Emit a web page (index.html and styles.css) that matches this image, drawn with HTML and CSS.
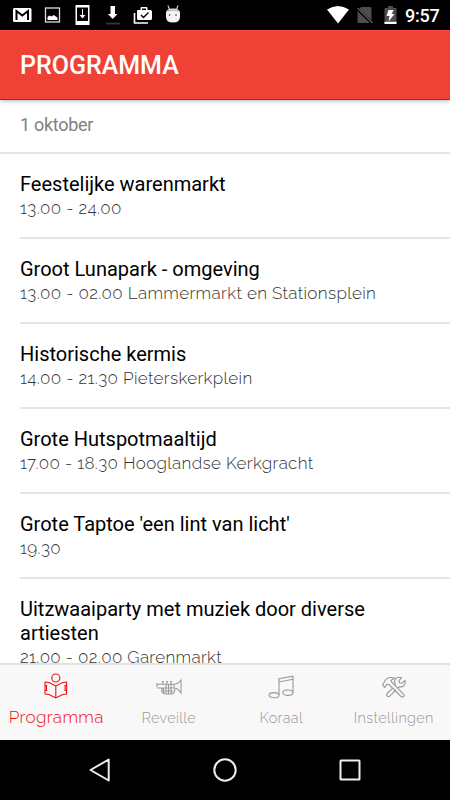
FILE: index.html
```html
<!DOCTYPE html>
<html lang="nl">
<head>
<meta charset="utf-8">
<title>Programma</title>
<link rel="stylesheet" href="styles.css">
</head>
<body>
<div class="phone">
  <div class="status">
    <svg class="status-icons" width="225" height="30" viewBox="0 0 225 30">
      <rect x="13" y="8" width="18.500" height="14" rx="1.500" fill="#fff"/>
      <path d="M16.500 20V11l5.800 4.500L28 11v9" fill="none" stroke="#000" stroke-width="2"/>
      <rect x="45.500" y="8" width="14" height="14" fill="none" stroke="#ddd" stroke-width="1.300"/>
      <path d="M47.500 20v-3l2-1.500 2 1 2-1.500 4 2.500V20z" fill="#fff"/>
      <path d="M75.500 5h14v20h-14z" fill="#fff"/>
      <path d="M77 7.500h11v13.500H77z" fill="#000"/>
      <path d="M82 9h1v6h2.500l-3 3.500-3-3.500H82z" fill="#fff"/>
      <path d="M110.500 6h4.500v8h2.500l-4.800 5-4.800-5h2.600z" fill="#fff"/>
      <path d="M106 22.500h14v2h-14z" fill="#333"/>
      <path d="M137.500 10h3V8q0-1 1-1h5q1 0 1 1v2h3q1.500 0 1.500 1.500v7q0 1.500-1.500 1.500h-12q-1.500 0-1.500-1.500v-7q0-1.500 .5-1.500z" fill="#fff"/>
      <path d="M142 8.500h4v1.500h-4z" fill="#000"/>
      <path d="M141 15l2.500 2.500 5-5" fill="none" stroke="#000" stroke-width="1.400"/>
      <path d="M134.500 13v10H148" fill="none" stroke="#fff" stroke-width="1.600"/>
      <path d="M166 13q0-4.500 7-4.500t7 4.500v4q0 5.500-7 5.500t-7-5.500z" fill="#f4f4f4"/>
      <path d="M168 5.500l1.500 4M178 5.500l-1.500 4" stroke="#ccc" stroke-width="1.200"/>
      <path d="M167 11q6-2 12 0" fill="none" stroke="#aaa"/>
      <circle cx="169.500" cy="15" r=".7"/><circle cx="176" cy="15" r=".7"/>
    </svg>
    <svg class="status-right" width="76" height="30" viewBox="327 0 76 30">
      <path d="M327 9.500q11-7 22 0l-11 14z" fill="#fff"/>
      <path d="M361 7h9q1.500 0 1.500 1.500V22q0 1-1 1h-12q-1 0-1-1V11z" fill="#4d4d4d"/>
      <path d="M356 7.500l16.500 16" stroke="#000" stroke-width="3"/>
      <path d="M357.500 8l15 15" stroke="#5a5a5a" stroke-width="1.200"/>
      <path d="M388 6h5v2h3.500v16h-12V8h3.500z" fill="#4d4d4d"/>
      <path d="M384.500 21.800h12V24h-12z" fill="#fff"/>
      <path d="M388.500 10h5l-1.800 4h2.800l-6 7.500 1-5.500h-3z" fill="#fff"/>
    </svg>
    <span class="clock">9:57</span>
  </div>
  <header class="appbar"><h1>PROGRAMMA</h1></header>
  <main class="content">
    <h2 class="date">1 oktober</h2>
    <ul class="events">
      <li><h3>Feestelijke warenmarkt</h3><p>13.00 - 24.00</p></li>
      <li><h3>Groot Lunapark - omgeving</h3><p>13.00 - 02.00 Lammermarkt en Stationsplein</p></li>
      <li><h3>Historische kermis</h3><p>14.00 - 21.30 Pieterskerkplein</p></li>
      <li><h3>Grote Hutspotmaaltijd</h3><p>17.00 - 18.30 Hooglandse Kerkgracht</p></li>
      <li><h3>Grote Taptoe 'een lint van licht'</h3><p>19.30</p></li>
      <li><h3>Uitzwaaiparty met muziek door diverse artiesten</h3><p>21.00 - 02.00 Garenmarkt</p></li>
    </ul>
  </main>
  <nav class="tabs">
    <a class="tab active">
      <svg width="28" height="28" viewBox="0 0 28 28"><circle cx="13.800" cy="6" r="4"/><path d="M13.800 14L7 10.500l-4-.5v3.500h1.500v5H3V22l4 .5 6.800 3.500 6.800-3.500 4-.5v-3.500h-1.500v-5h1.500V10l-4 .5zM13.800 14v12M3 13.500v5M24.600 13.500v5"/></svg>
      <span>Programma</span>
    </a>
    <a class="tab">
      <svg width="28" height="28" viewBox="0 0 28 28"><path d="M2 11v4M2 12.300h17q4 0 7-4.300v13q-3-5-7-5H2M8 12v-2M12 12v-2M16 12v-2M7 9.500h2M11 9.500h2M15 9.500h2M8 16q-2 1-1 4 1 2 4 2h5q4 0 4-6M8.500 16v5.500M11 12v9.500M13.500 12v9.500M16 12v9.500M8.500 19h9.500M19 12.500v3.500"/></svg>
      <span>Reveille</span>
    </a>
    <a class="tab">
      <svg width="28" height="28" viewBox="0 0 28 28"><ellipse cx="7" cy="23.200" rx="5" ry="2.600"/><ellipse cx="20.800" cy="20.700" rx="5" ry="2.700"/><path d="M12 23V6.800L26 4.200v16.500M12 10l14-2.700"/></svg>
      <span>Koraal</span>
    </a>
    <a class="tab">
      <svg width="28" height="28" viewBox="0 0 28 28"><path d="M2.500 13l1.800-3q2.500-5 7.200-4.500l3 .5-3.500 2.500 1 2L24 22.500q.5 1-.5 2t-2.500 0L9 12.500l-2-.2-2.300 3zM15.500 13.500l-1-4q.5-4 5-4.300l2 .5-2.500 3 .5 2 2.300.5 3.200-2.700q1 3-1 5.200-2 1.600-4.500 1l-1.500 1.300M16 18l-6.500 6.300q-1.500.7-2.500-.5t0-2.300l6-5.700"/></svg>
      <span>Instellingen</span>
    </a>
  </nav>
  <div class="sysnav">
    <svg width="24" height="24" viewBox="0 0 24 24"><path d="M2.500 12L20.700 1.500v21z"/></svg>
    <svg width="24" height="24" viewBox="0 0 24 24"><circle cx="12" cy="12" r="10.700"/></svg>
    <svg width="24" height="24" viewBox="0 0 24 24"><rect x="2.500" y="2.500" width="19" height="19" rx=".5"/></svg>
  </div>
</div>
</body>
</html>
```
FILE: styles.css
```css
* { box-sizing: border-box; margin: 0; padding: 0; }
body { font-family: Roboto, sans-serif; background: #fff; }
.phone { width: 450px; height: 800px; display: flex; flex-direction: column; overflow: hidden; }
.status { height: 30px; flex: none; background: #000; display: flex; align-items: center; }
.status-right { margin-left: 102px; }
.clock { color: #fff; font-size: 18px; font-weight: 500; line-height: 31px; margin-left: 2px; letter-spacing: -.2px; }
.appbar { height: 70px; flex: none; background: #ef4136; border-top: 1px solid #ff4a3e; border-bottom: 1px solid #d90f0f; box-shadow: 0 1px 4px rgba(0,0,0,.3); padding-left: 20px; position: relative; }
.appbar h1 { color: #fff; font-size: 25px; font-weight: 500; line-height: 69px; }
.content { flex: 1; min-height: 0; overflow: hidden; }
.date { height: 54px; border-bottom: 2px solid #e5e5e5; padding: 13px 20px 0; font-size: 18px; letter-spacing: -.3px; line-height: 24px; font-weight: 400; color: #808080; }
.events { list-style: none; padding-left: 20px; }
.events li { border-bottom: 2px solid #e5e5e5; padding: 18px 60px 17px 0; }
.events h3 { font-size: 20px; line-height: 24px; font-weight: 400; color: #000; }
.events p, .tab { font-family: Raleway, Lato, sans-serif; font-weight: 300; font-variant-numeric: oldstyle-nums; }
.events p { font-size: 17px; line-height: 24px; color: #333; white-space: nowrap; letter-spacing: .35px; }
.tabs { height: 77px; flex: none; background: #f8f8f8; border-top: 2px solid #e2e2e2; display: grid; grid-template-columns: repeat(4, 1fr); }
.tab { display: flex; flex-direction: column; align-items: center; color: #999; font-size: 14.5px; line-height: 20px; padding-top: 7px; letter-spacing: .3px; }
.tab svg { fill: none; stroke: currentColor; stroke-width: 1.1; }
.tab span { margin-top: 8px; }
.tab.active { color: #ee0f0f; font-size: 17px; letter-spacing: .4px; }
.tab.active span { margin-top: 7px; }
.sysnav { height: 60px; flex: none; background: #000; display: flex; justify-content: center; gap: 101px; align-items: center; }
.sysnav svg { fill: none; stroke: #eee; stroke-width: 2; stroke-linejoin: round; }
```
